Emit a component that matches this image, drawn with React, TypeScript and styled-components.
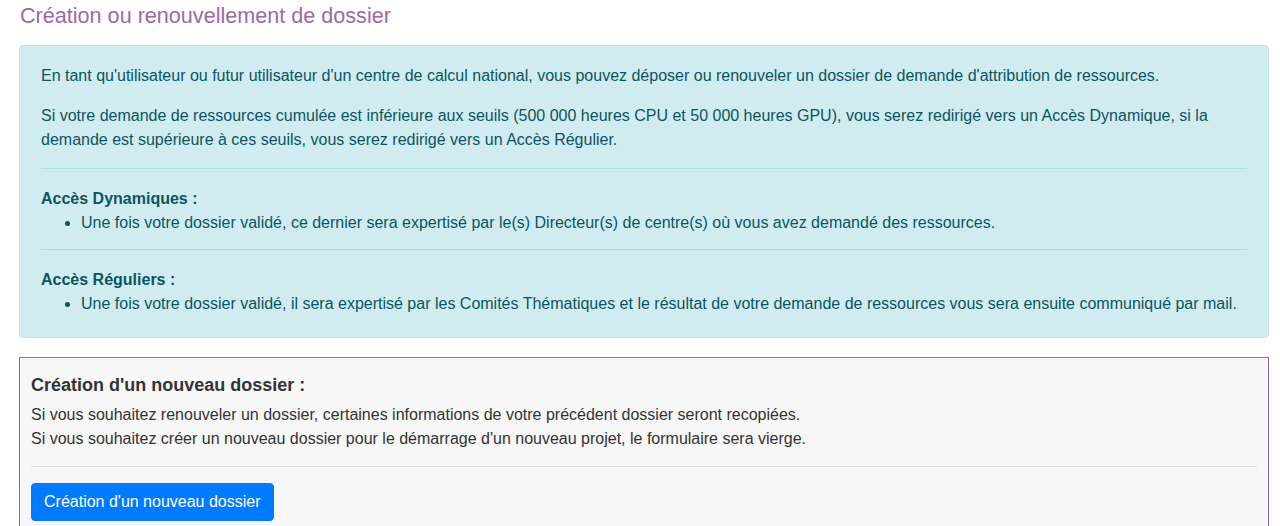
import React from "react";
import styled, { createGlobalStyle } from "styled-components";

const Global = createGlobalStyle`
  html, body { margin: 0; padding: 0; background: #ffffff; }
  body {
    font-family: "Liberation Sans", Arial, Helvetica, sans-serif;
    font-size: 16px;
    line-height: 24px;
    color: #333333;
  }
  * { box-sizing: border-box; }
`;

const Page = styled.div`
  padding: 4px 11px 0 19px;
`;

const Title = styled.h2`
  margin: 0 0 17px 1px;
  font-size: 21.6px;
  line-height: 24px;
  font-weight: 400;
  color: #9b69a9;
`;

const InfoBox = styled.div`
  background: #d1ecf1;
  border: 1px solid #bee5eb;
  border-radius: 4px;
  color: #0c5460;
  padding: 18px 21px 21px 21px;
`;

const Para = styled.p`
  margin: 0 0 16px 0;
`;

const Rule = styled.hr<{ $tone: "info" | "light" }>`
  margin: 0 0 16px 0;
  border: 0;
  border-top: 1px solid ${(p) => (p.$tone === "info" ? "#abdde5" : "#dddddd")};
`;

const SectionTitle = styled.div`
  padding-top: 2px;
  font-weight: 700;
`;

const List = styled.ul`
  margin: 0 0 14px 0;
  padding-left: 40px;
  &:last-child { margin-bottom: 0; }
`;

const CreateBox = styled.div`
  margin-top: 19px;
  background: #f7f7f7;
  border: 1px solid #9b69a9;
  border-bottom: 0;
  padding: 15px 11px 6px 11px;
`;

const CreateTitle = styled.h5`
  margin: 0 0 6px 0;
  font-size: 18px;
  line-height: 24px;
  font-weight: 700;
  color: #333333;
`;

const Text = styled.p`
  margin: 0 0 15px 0;
`;

const Button = styled.button`
  display: inline-block;
  font-family: "Liberation Sans", Arial, Helvetica, sans-serif;
  font-size: 16px;
  line-height: 24px;
  padding: 6px 12px;
  color: #ffffff;
  background: #007bff;
  border: 1px solid #007bff;
  border-radius: 4px;
  cursor: pointer;
`;

export default function App() {
  return (
    <>
      <Global />
      <Page>
        <Title>Création ou renouvellement de dossier</Title>
        <InfoBox>
          <Para>
            En tant qu'utilisateur ou futur utilisateur d'un centre de calcul national, vous pouvez déposer ou renouveler un dossier de demande d'attribution de ressources.
          </Para>
          <Para>
            Si votre demande de ressources cumulée est inférieure aux seuils (500 000 heures CPU et 50 000 heures GPU), vous serez redirigé vers un Accès Dynamique, si la demande est supérieure à ces seuils, vous serez redirigé vers un Accès Régulier.
          </Para>
          <Rule $tone="info" />
          <SectionTitle>Accès Dynamiques :</SectionTitle>
          <List>
            <li>Une fois votre dossier validé, ce dernier sera expertisé par le(s) Directeur(s) de centre(s) où vous avez demandé des ressources.</li>
          </List>
          <Rule $tone="info" />
          <SectionTitle>Accès Réguliers :</SectionTitle>
          <List>
            <li>Une fois votre dossier validé, il sera expertisé par les Comités Thématiques et le résultat de votre demande de ressources vous sera ensuite communiqué par mail.</li>
          </List>
        </InfoBox>
        <CreateBox>
          <CreateTitle>Création d'un nouveau dossier :</CreateTitle>
          <Text>
            Si vous souhaitez renouveler un dossier, certaines informations de votre précédent dossier seront recopiées.
            <br />
            Si vous souhaitez créer un nouveau dossier pour le démarrage d'un nouveau projet, le formulaire sera vierge.
          </Text>
          <Rule $tone="light" />
          <Button type="button">Création d'un nouveau dossier</Button>
        </CreateBox>
      </Page>
    </>
  );
}
